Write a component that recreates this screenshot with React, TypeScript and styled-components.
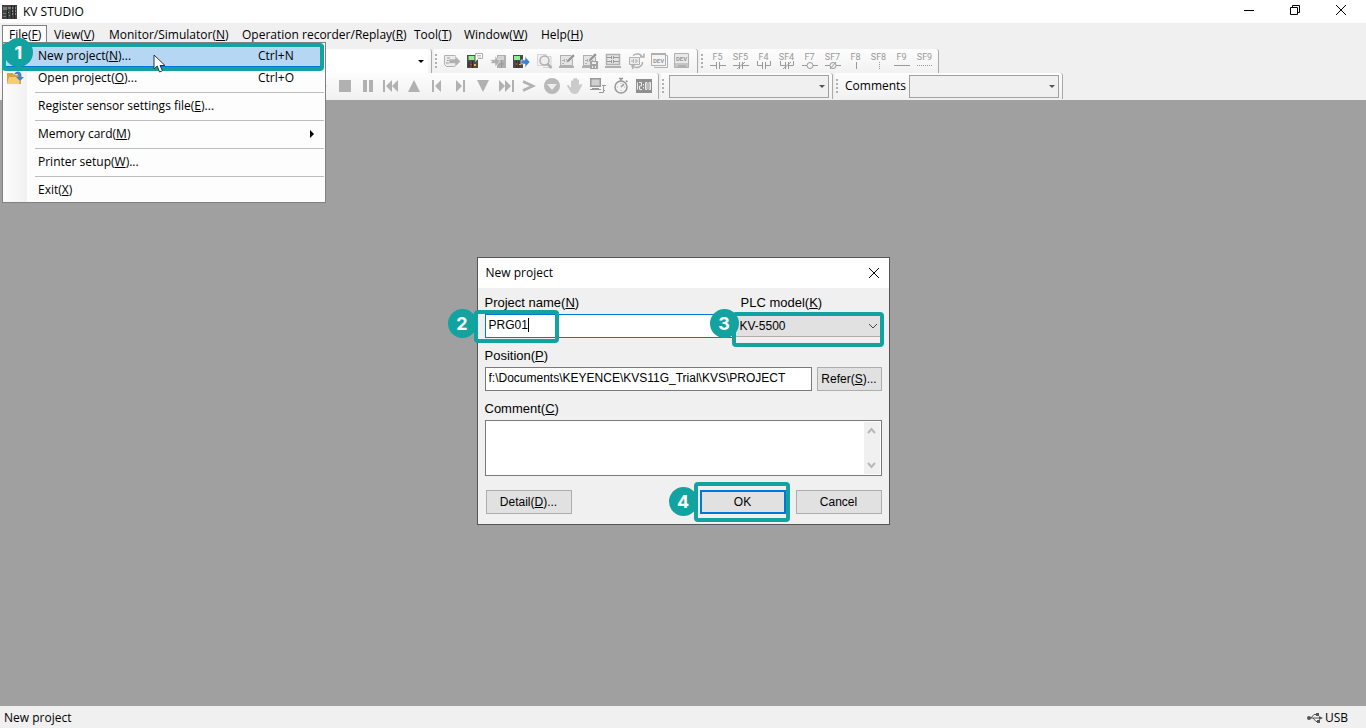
import React from "react";
import styled, { createGlobalStyle, css } from "styled-components";

const TEAL = "#12a3a0";
const UI_FONT = `"Open Sans", "Noto Sans", sans-serif`;
const DIALOG_FONT = `"Liberation Sans", Arial, sans-serif`;

const GlobalStyle = createGlobalStyle`
  *, *::before, *::after { box-sizing: border-box; }
  body { margin: 0; background: #a0a0a0; color: #000; font: 12px/16px ${UI_FONT}; }
  button, select, input, textarea { font: inherit; color: inherit; margin: 0; }
  svg { display: block; flex: none; }
`;

const Window = styled.div`
  display: flex;
  flex-direction: column;
  min-height: 100vh;
`;

const TitleBar = styled.header`
  display: flex;
  align-items: center;
  height: 23px;
  padding-left: 2px;
  gap: 5px;
  background: #fff;
`;

const AppTitle = styled.h1`
  flex: 1;
  margin: 0;
  font-size: 12px;
  font-weight: 400;
`;

const CaptionButton = styled.button`
  display: flex;
  align-items: center;
  justify-content: center;
  width: 46px;
  height: 20px;
  padding: 0;
  border: 0;
  background: none;
`;

const CaptionButtons = styled.div`
  display: flex;
  align-self: flex-start;
  padding-right: 2px;
`;

const MenuBar = styled.nav`
  display: flex;
  height: 26px;
  padding: 2px 2px 4px;
  background: #f0f0f0;
`;

const MenuGroup = styled.div`
  position: relative;
`;

const MenuTitle = styled.button<{ $open?: boolean; $width: number }>`
  width: ${(p) => p.$width}px;
  height: 20px;
  padding: 0 0 2px 6px;
  border: 1px solid ${(p) => (p.$open ? "#808080" : "transparent")};
  border-bottom: 0;
  background: ${(p) => (p.$open ? "#fcfcfc" : "none")};
  line-height: 16px;
  text-align: left;
  white-space: nowrap;
`;

const DropDown = styled.div`
  position: absolute;
  top: 17px;
  left: 0;
  z-index: 5;
  width: 324px;
  padding: 2px 1px 1px 0;
  border: 1px solid #808080;
  background: linear-gradient(90deg, #fcfcfc, #f1f1f1) 0 0 / 24px 100% no-repeat #fdfdfd;
`;

const MenuItem = styled.button<{ $active?: boolean }>`
  position: relative;
  display: grid;
  grid-template-columns: 35px 1fr 66px;
  align-items: center;
  width: 100%;
  height: 22px;
  padding: 0;
  border: 0;
  border-bottom: 1px solid ${(p) => (p.$active ? "#0078d7" : "transparent")};
  background: ${(p) => (p.$active ? "#b5d7f3" : "none")};
  text-align: left;
`;

const Separator = styled.hr`
  height: 1px;
  margin: 3px 0 2px 32px;
  border: 0;
  background: #bdbdbd;
`;

const IconCell = styled.span`
  display: flex;
  padding-left: 4px;
`;

const ArrowCell = styled.span`
  display: flex;
  padding-left: 52px;
`;

const Highlight = styled.span<{ $inset: string }>`
  position: absolute;
  z-index: 2;
  inset: ${(p) => p.$inset};
  border: 4px solid ${TEAL};
  border-radius: 4px;
  pointer-events: none;
`;

const Badge = styled.span<{ $x: number; $y: number }>`
  position: absolute;
  z-index: 3;
  left: ${(p) => p.$x}px;
  top: ${(p) => p.$y}px;
  width: 29px;
  height: 29px;
  border-radius: 50%;
  background: ${TEAL};
  color: #fff;
  font: 700 18px/29px Inter, sans-serif;
  text-align: center;
  pointer-events: none;
`;

const Pointer = styled.svg`
  position: absolute;
  z-index: 4;
  left: 150px;
  top: 9px;
`;

const ToolBars = styled.div`
  display: flex;
  flex-direction: column;
  padding-bottom: 1px;
  background: #f0f0f0;
`;

const ToolRow = styled.div<{ $height: number }>`
  display: flex;
  gap: 2px;
  height: ${(p) => p.$height}px;
`;

const Strip = styled.div<{ $width: number }>`
  display: flex;
  align-items: center;
  width: ${(p) => p.$width}px;
  border-right: 1px solid #a9a9a9;
  border-radius: 0 3px 0 0;
  background: linear-gradient(#fdfdfd, #f1f1f1);
`;

const Grip = styled.i`
  flex: none;
  width: 2px;
  height: 14px;
  margin: 0 3px 0 1px;
  background: repeating-linear-gradient(#b0b0b0 0 2px, transparent 2px 4px);
`;

const ToolButton = styled.button`
  display: flex;
  flex-direction: column;
  align-items: center;
  justify-content: center;
  width: 23px;
  height: 22px;
  padding: 0;
  border: 0;
  background: none;
  color: #999;
`;

const KeyCaption = styled.span`
  height: 8px;
  font: 9px/8px "Liberation Sans Narrow", "Roboto", sans-serif;
`;

const PlaybackGroup = styled.div`
  display: flex;
  margin-left: auto;
  padding-right: 3px;
`;

const Combo = styled.span<{ $width: number }>`
  display: flex;
  position: relative;
  width: ${(p) => p.$width}px;
  margin-left: 2px;
`;

const ComboArrow = styled.svg`
  position: absolute;
  right: 4px;
  top: 9px;
  pointer-events: none;
`;

const ToolSelect = styled.select<{ $plain?: boolean }>`
  appearance: none;
  width: 100%;
  height: 23px;
  border: 1px solid ${(p) => (p.$plain ? "#fff" : "#a0a0a0")};
  border-radius: 0;
  background: ${(p) => (p.$plain ? "#fff" : "#f0f0f0")};
`;

const ToolLabel = styled.label`
  width: 66px;
  padding-left: 4px;
`;

const Workspace = styled.main`
  display: flex;
  flex: 1;
  flex-direction: column;
  align-items: center;
  padding: 157px 16px 32px;
  background: #a0a0a0;
`;

const Dialog = styled.section`
  width: 413px;
  border: 1px solid #555;
  background: #f0f0f0;
  font: 12px/16px ${DIALOG_FONT};
`;

const DialogHeader = styled.header`
  display: flex;
  align-items: center;
  justify-content: space-between;
  height: 30px;
  padding-left: 8px;
  background: #fff;
`;

const DialogTitle = styled.h2`
  margin: 0;
  font: 400 12px/16px ${UI_FONT};
`;

const DialogClose = styled.button`
  display: flex;
  align-items: center;
  justify-content: center;
  width: 30px;
  height: 28px;
  padding: 0;
  border: 0;
  background: none;
`;

const DialogForm = styled.form`
  display: flex;
  flex-direction: column;
  gap: 10px;
  padding: 7px 7px 10px;
`;

const FieldRow = styled.div`
  display: flex;
  align-items: flex-end;
`;

const Field = styled.div<{ $width?: number }>`
  position: relative;
  display: flex;
  flex-direction: column;
  gap: 3px;
  ${(p) => (p.$width ? css`width: ${p.$width}px;` : css`flex: 1;`)}
`;

const FieldLabel = styled.label<{ $indent?: boolean }>`
  padding-left: ${(p) => (p.$indent ? 6 : 0)}px;
  font-size: 13px;
`;

const TextInput = styled.input<{ $focused?: boolean }>`
  width: 100%;
  height: 24px;
  padding: 0 3px 2px;
  border: 1px solid ${(p) => (p.$focused ? "#0078d7" : "#7a7a7a")};
  border-radius: 0;
  background: #fff;
  outline: 0;
`;

const Caret = styled.span`
  position: absolute;
  left: 43px;
  top: 23px;
  width: 1px;
  height: 14px;
  background: #000;
`;

const ModelSelect = styled.select`
  appearance: none;
  width: 100%;
  height: 23px;
  margin-bottom: 1px;
  padding: 0 4px;
  border: 1px solid #adadad;
  border-radius: 0;
  background: #e1e1e1;
`;

const ModelArrow = styled.svg`
  position: absolute;
  right: 4px;
  top: 28px;
  pointer-events: none;
`;

const CommentBox = styled.div`
  display: flex;
  height: 56px;
  padding: 1px;
  border: 1px solid #7a7a7a;
  background: #fff;
`;

const CommentArea = styled.textarea`
  flex: 1;
  padding: 2px;
  border: 0;
  background: none;
  outline: 0;
  resize: none;
`;

const ScrollTrack = styled.div`
  display: flex;
  flex-direction: column;
  align-items: center;
  justify-content: space-between;
  width: 16px;
  padding: 5px 0;
  background: #f0f0f0;
`;

const PushButton = styled.button<{ $default?: boolean; $width: number }>`
  width: ${(p) => p.$width}px;
  height: 24px;
  padding: 0;
  border: ${(p) => (p.$default ? "2px solid #0078d7" : "1px solid #adadad")};
  background: #e1e1e1;
  white-space: nowrap;
`;

const ReferSlot = styled.div`
  display: flex;
  padding-left: 5px;
`;

const Actions = styled.div`
  display: flex;
  gap: 10px;
  padding: 4px 0 0 1px;
`;

const ActionSlot = styled.div`
  position: relative;
  margin-left: auto;
`;

const StatusBar = styled.footer`
  display: flex;
  align-items: center;
  justify-content: space-between;
  height: 22px;
  padding: 1px 18px 0 4px;
  background: #f0f0f0;
`;

const Connection = styled.span`
  display: flex;
  align-items: center;
  gap: 2px;
`;

const Mnemonic = styled.u`
  text-decoration-thickness: 1px;
  text-underline-offset: 1px;
`;

function Caption({ text, k, dots }: { text: string; k: string; dots?: boolean }) {
  return (
    <span>
      {text}(<Mnemonic>{k}</Mnemonic>){dots ? "..." : ""}
    </span>
  );
}

const G = "#b0b0b0";
const D = "#999";
const L = "#d4d4d4";

function Icon({ children }: { children: React.ReactNode }) {
  return (
    <svg width="20" height="20" viewBox="0 0 20 20" aria-hidden="true">
      {children}
    </svg>
  );
}

const laptop = (
  <>
    <rect x="3.500" y="4.500" width="12" height="10" fill="#e4e4e4" stroke={G} />
    <path d="M5 9.500h2M7.500 8v3M9.500 8v3M10 9.500h3M5 12.500h2" stroke={G} fill="none" />
    <path d="M2 15h15v2H2z" fill={G} />
  </>
);

const editIcons: [string, React.ReactNode][] = [
  ["Transfer setup", (
    <>
      <path d="M2.500 4.500h11v11h-9l-2-2z" fill="#ececec" stroke={G} />
      <path d="M5 7h3M5 9.500h2M4 12h4" stroke={D} />
      <path d="M7 8h6V4.500l5.500 6-5.500 5.500v-3.500H7z" fill={G} stroke="#eee" strokeWidth=".6" />
    </>
  )],
  ["Monitor", (
    <>
      <path d="M2 4h11v13H2z" fill="#4b4b4b" />
      <path d="M3.500 5h6v4h-6z" fill="#8eef8e" />
      <path d="M4 11v5M7.500 10v7" stroke="#2c2c2c" />
      <path d="M5 13h2v1H5z" fill="#e33" />
      <path d="M9 13h2v2H9z" fill="#f0b429" />
      <path d="M10.500 2.500h7v5h-4l-3 3z" fill="#fff" stroke="#aaa" />
      <path d="M12 4.500h4M12 6h4" stroke="#aaa" strokeWidth=".7" />
    </>
  )],
  ["Write to PLC", (
    <>
      <path d="M9 4h9v13H9z" fill={G} />
      <path d="M10 5h6v4h-6z" fill={L} />
      <path d="M13.500 9v8M10 13h6" stroke={D} />
      <path d="M2 8.500h5V5l5 5.500L7 16v-3.500H2l2-2z" fill={G} stroke="#f2f2f2" strokeWidth=".7" />
    </>
  )],
  ["Read from PLC", (
    <>
      <path d="M2 4h10v13H2z" fill="#4b4b4b" />
      <path d="M3 5h6v4H3z" fill="#8eef8e" />
      <path d="M5.500 10v7M8 10v7" stroke="#2c2c2c" />
      <path d="M5 12h1v2H5z" fill="#e33" />
      <path d="M8 13h2v1H8z" fill="#f0b429" />
      <path d="M10 9h4V5.500l5 5.500-5 5.500V13h-4z" fill="#3f82cc" stroke="#f4f4f4" strokeWidth=".6" />
    </>
  )],
  ["Verify", (
    <>
      <path d="M3.500 3.500h9v11h-9zM14 5.500h3v11H9" fill="#f2f2f2" stroke={L} />
      <circle cx="10.500" cy="9.500" r="4.500" fill="#eee" stroke={G} strokeWidth="1.500" />
      <path d="m13.500 13 4 4" stroke={G} strokeWidth="2.500" />
    </>
  )],
  ["Edit", (
    <>
      {laptop}
      <path d="m9 12 1-3 6-6 2 2-6 6z" fill={D} stroke="#eee" strokeWidth=".6" />
    </>
  )],
  ["Edit and transfer", (
    <>
      {laptop}
      <path d="m8 11 1-3 6-6 2 2-6 6z" fill={D} stroke="#eee" strokeWidth=".6" />
      <path d="M10 10h8v8h-8z" fill="#a4a4a4" />
      <path d="M12 11h4v2h-4zM12 15h1v2h-1zM15 15h1v2h-1z" fill="#eee" />
    </>
  )],
  ["Ladder monitor", (
    <>
      <path d="M3.500 3.500h13v10h-13z" fill="#e4e4e4" stroke={G} strokeWidth="1.500" />
      <path d="M4 6.500h4M11 6.500h5M4 10.500h4M11 10.500h5M8.500 5v3M10.500 5v3M8.500 9v3M10.500 9v3" stroke={D} />
      <path d="M2 15h16v2H2z" fill={G} />
    </>
  )],
  ["Refresh", (
    <>
      <path d="M3.500 6.500h10v7h-10z" fill="#ececec" stroke={G} />
      <path d="M5 10h2M7.500 8v4M10 8v4M10 10h2" stroke={G} />
      <path d="M7 4.500c4-3 8-1.500 9.500 2M14 6h4V2.500" fill="none" stroke={G} strokeWidth="1.500" />
      <path d="M16.500 11c0 5-6 7-10 4M9 13.500l-3 1.500 1 3" fill="none" stroke={G} strokeWidth="1.500" />
    </>
  )],
  ["Device comment", (
    <>
      <path d="M5.500 15.500v1h13v-12h-2" fill="none" stroke={G} />
      <path d="M2.500 2.500h14v12h-14z" fill="#f4f4f4" stroke={G} />
      <path d="M2 2h15v2H2z" fill={G} />
      <text x="9.500" y="12" fontSize="6" fontWeight="700" textAnchor="middle" fill={D} fontFamily="Roboto">DEV</text>
    </>
  )],
  ["Device monitor", (
    <>
      <path d="M2.500 2.500h14v14h-14z" fill="#e8e8e8" stroke={G} />
      <path d="M3 12h13v4H3z" fill="#c6c6c6" />
      <path d="M6 14h8v3H6z" fill={G} />
      <text x="9.500" y="10" fontSize="6" fontWeight="700" textAnchor="middle" fill={D} fontFamily="Roboto">DEV</text>
    </>
  )],
];

const keyIcons: [string, string][] = [
  ["F5", "M0 6.500h6M6.500 3v7M9.500 3v7M10 6.500h6"],
  ["SF5", "M0 6.500h6M6.500 3v7M9.500 3v7M10 6.500h6M4 10l8-7"],
  ["F4", "M1.500 2v4.500H6M6.500 3v7M9.500 3v7M10 6.500h4.500V2"],
  ["SF4", "M1.500 2v4.500H6M6.500 3v7M9.500 3v7M10 6.500h4.500V2M4 10l8-7"],
  ["F7", "M0 6.500h5M11 6.500h5M5 6.500a3 3 0 1 0 6 0a3 3 0 1 0-6 0"],
  ["SF7", "M0 6.500h5M11 6.500h5M5 6.500a3 3 0 1 0 6 0a3 3 0 1 0-6 0M5 10l6-7"],
  ["F8", "M8.500 3v7"],
  ["SF8", "M8.500 3v1M8.500 5v1M8.500 7v1M8.500 9v1"],
  ["F9", "M0 6.500h16"],
  ["SF9", "M0 6.500h1M2 6.500h1M4 6.500h1M6 6.500h1M8 6.500h1M10 6.500h1M12 6.500h1M14 6.500h1"],
];

const S = "#b1b1b1";
const playIcons: [string, React.ReactNode][] = [
  ["Run", <path d="M5 4v12l10-6z" fill={S} />],
  ["Stop", <path d="M4 4h12v12H4z" fill={S} />],
  ["Pause", <path d="M5 4h4v12H5zM11 4h4v12h-4z" fill={S} />],
  ["Rewind", <path d="M2 4h2v12H2zM11 4v12l-6-6zM17 4v12l-6-6z" fill={S} />],
  ["Step up", <path d="M10 4l6 12H4z" fill={S} />],
  ["Step back", <path d="M5 4h2v12H5zM14 4v12l-6-6z" fill={S} />],
  ["Step forward", <path d="M13 4h2v12h-2zM6 4v12l6-6z" fill={S} />],
  ["Step down", <path d="M4 4h12l-6 12z" fill={S} />],
  ["Fast forward", <path d="M16 4h2v12h-2zM3 4v12l6-6zM9 4v12l6-6z" fill={S} />],
  ["Continue", <path d="M4 5.500 14 10 4 14.500" fill="none" stroke={S} strokeWidth="2.500" />],
  ["Record", (
    <>
      <circle cx="10" cy="10" r="8" fill="#b9b9b9" />
      <path d="M5 8h10l-5 6z" fill="#eee" />
    </>
  )],
  ["Hand", (
    <path d="M6 12V5q1-1.500 2 0V3q1-1.500 2 0V2.500q1-1.500 2 0V4q1.500-1.500 2 0v5l2-1q2 0 1 1.500L14 15q-1 3-4 3-4 0-5-3L2 10q0-1.500 1.500-1L6 12z" fill="#cbcbcb" />
  )],
  ["Network", (
    <>
      <path d="M2 2h11v9H2z" fill={D} />
      <path d="M3.500 3.500h8v6h-8z" fill="#d0d0d0" />
      <path d="M4 12h7v1H4zM2 13h11v1H2z" fill={D} />
      <path d="M11 16.500h4.500v-7M14 9.500h4M17 14l-2 2" stroke={D} fill="none" />
    </>
  )],
  ["Timer", (
    <>
      <circle cx="10" cy="11" r="6" fill="#f3f3f3" stroke={D} strokeWidth="1.500" />
      <path d="M8 2.500h4M10 2.500V5M15 4.500l1.500 1.500M10 11l3-3" stroke={D} strokeWidth="1.500" fill="none" />
      <path d="M10 7v1M6 11h1M13 11h1M10 14v1" stroke={G} />
    </>
  )],
  ["Clock", (
    <>
      <path d="M2 3h16v14H2z" fill="#8e8e8e" />
      <path d="M3.500 6.500v7M5 6.500h2.500V10H5.500v3.500H8M9.500 8v1.500M9.500 11v1.500M11.500 6.500h1.500v7h-1.500zM15 6.500h1.500v7H15z" fill="none" stroke="#eee" />
    </>
  )],
];

const menus: [string, string, number][] = [
  ["View", "V", 55],
  ["Monitor/Simulator", "N", 133],
  ["Operation recorder/Replay", "R", 172],
  ["Tool", "T", 50],
  ["Window", "W", 77],
  ["Help", "H", 56],
];

function DownArrow({ color = "#555" }: { color?: string }) {
  return (
    <ComboArrow width="6" height="5" viewBox="0 0 6 5">
      <path d="M0 1h6L3 4z" fill={color} />
    </ComboArrow>
  );
}

export default function App() {
  return (
    <Window>
      <GlobalStyle />
      <TitleBar>
        <svg width="16" height="16" viewBox="0 0 16 16" aria-hidden="true">
          <path d="M0 1h15v14H0z" fill="#424242" />
          <path d="M1 3h4v3H1zM6 3h3v2H6zM1 9h3v1H1zM1 12h3v1H1z" fill="#777" />
          <path d="M5.500 6v9M9.500 1v14M12.500 1v14" stroke="#222" />
          <path d="M10.500 3v9M13.500 3v9" stroke="#8a8a8a" strokeDasharray="2 1" />
          <path d="M6 8h1v1H6zM7 11h1v1H7z" fill="#6b6" />
        </svg>
        <AppTitle>KV STUDIO</AppTitle>
        <CaptionButtons>
          <CaptionButton aria-label="Minimize">
            <svg width="12" height="12" viewBox="0 0 12 12"><path d="M1 6.500h10" stroke="#000" /></svg>
          </CaptionButton>
          <CaptionButton aria-label="Restore">
            <svg width="12" height="12" viewBox="0 0 12 12"><path d="M1.500 3.500h7v7h-7zM3.500 3V1.500h7v7H9" fill="none" stroke="#000" /></svg>
          </CaptionButton>
          <CaptionButton aria-label="Close">
            <svg width="12" height="12" viewBox="0 0 12 12"><path d="m1 1 10 10M11 1 1 11" stroke="#000" /></svg>
          </CaptionButton>
        </CaptionButtons>
      </TitleBar>

      <MenuBar>
        <MenuGroup>
          <MenuTitle $open $width={45}><Caption text="File" k="F" /></MenuTitle>
          <DropDown>
            <MenuItem $active>
              <span />
              <Caption text="New project" k="N" dots />
              <span>Ctrl+N</span>
              <Highlight $inset="-2px 0 -5px -1px" />
              <Badge $x={1} $y={-7}>1</Badge>
              <Pointer width="13" height="20" viewBox="0 0 13 20">
                <path d="M1 1v14l3.200-3 2.300 6 3-1.200-2.500-5.300H12z" fill="#fff" stroke="#333" />
              </Pointer>
            </MenuItem>
            <MenuItem>
              <IconCell>
                <svg width="17" height="16" viewBox="0 0 17 16" aria-hidden="true">
                  <path d="M0 3h6l1 2h7v9H0z" fill="#d9a43b" />
                  <path d="M2 7h12l-2 7H0z" fill="#f6cd72" />
                  <path d="M7 5c1-5 8-5 7.500 2H17l-4 4-4-4h2.500C12 3.500 9 3.500 7 5z" fill="#4a80c4" />
                </svg>
              </IconCell>
              <Caption text="Open project" k="O" dots />
              <span>Ctrl+O</span>
            </MenuItem>
            <Separator />
            <MenuItem><span /><Caption text="Register sensor settings file" k="E" dots /></MenuItem>
            <Separator />
            <MenuItem>
              <span />
              <Caption text="Memory card" k="M" />
              <ArrowCell>
                <svg width="5" height="8" viewBox="0 0 5 8"><path d="M0 0v8l4-4z" /></svg>
              </ArrowCell>
            </MenuItem>
            <Separator />
            <MenuItem><span /><Caption text="Printer setup" k="W" dots /></MenuItem>
            <Separator />
            <MenuItem><span /><Caption text="Exit" k="X" /></MenuItem>
          </DropDown>
        </MenuGroup>
        {menus.map(([text, k, width]) => (
          <MenuTitle key={text} $width={width}><Caption text={text} k={k} /></MenuTitle>
        ))}
      </MenuBar>

      <ToolBars>
        <ToolRow $height={24}>
          <Strip $width={432}>
            <Combo $width={426}>
              <ToolSelect $plain aria-label="Unit" />
              <DownArrow color="#000" />
            </Combo>
          </Strip>
          <Strip $width={264}>
            <Grip />
            {editIcons.map(([name, art]) => (
              <ToolButton key={name} aria-label={name}><Icon>{art}</Icon></ToolButton>
            ))}
          </Strip>
          <Strip $width={239}>
            <Grip />
            {keyIcons.map(([name, d]) => (
              <ToolButton key={name}>
                <KeyCaption>{name}</KeyCaption>
                <svg width="16" height="9" viewBox="0 2 16 9" aria-hidden="true">
                  <path d={d} fill="none" stroke="#999" />
                </svg>
              </ToolButton>
            ))}
          </Strip>
        </ToolRow>
        <ToolRow $height={26}>
          <Strip $width={659}>
            <PlaybackGroup>
              {playIcons.map(([name, art]) => (
                <ToolButton key={name} aria-label={name}><Icon>{art}</Icon></ToolButton>
              ))}
            </PlaybackGroup>
          </Strip>
          <Strip $width={172}>
            <Grip />
            <Combo $width={160}>
              <ToolSelect aria-label="Target" />
              <DownArrow />
            </Combo>
          </Strip>
          <Strip $width={228}>
            <Grip />
            <ToolLabel htmlFor="comments">Comments</ToolLabel>
            <Combo $width={150}>
              <ToolSelect id="comments" />
              <DownArrow />
            </Combo>
          </Strip>
        </ToolRow>
      </ToolBars>

      <Workspace>
        <Dialog role="dialog" aria-labelledby="dialog-title">
          <DialogHeader>
            <DialogTitle id="dialog-title">New project</DialogTitle>
            <DialogClose aria-label="Close">
              <svg width="12" height="12" viewBox="0 0 12 12"><path d="m1 1 10 10M11 1 1 11" stroke="#000" /></svg>
            </DialogClose>
          </DialogHeader>
          <DialogForm onSubmit={(e) => e.preventDefault()}>
            <FieldRow>
              <Field $width={250}>
                <FieldLabel htmlFor="name"><Caption text="Project name" k="N" /></FieldLabel>
                <TextInput id="name" $focused defaultValue="PRG01" />
                <Caret />
                <Highlight $inset="15px 176px -5px -11px" />
                <Badge $x={-37} $y={14}>2</Badge>
              </Field>
              <Field>
                <FieldLabel htmlFor="model" $indent><Caption text="PLC model" k="K" /></FieldLabel>
                <ModelSelect id="model"><option>KV-5500</option></ModelSelect>
                <ModelArrow width="10" height="7" viewBox="0 0 10 7">
                  <path d="m1 1 4 4 4-4" fill="none" stroke="#444" />
                </ModelArrow>
                <Highlight $inset="17px -2px -9px -3px" />
                <Badge $x={-25} $y={14}>3</Badge>
              </Field>
            </FieldRow>
            <FieldRow>
              <Field>
                <FieldLabel htmlFor="position"><Caption text="Position" k="P" /></FieldLabel>
                <TextInput id="position" defaultValue="f:\Documents\KEYENCE\KVS11G_Trial\KVS\PROJECT" />
              </Field>
              <ReferSlot>
                <PushButton type="button" $width={65}><Caption text="Refer" k="S" dots /></PushButton>
              </ReferSlot>
            </FieldRow>
            <Field>
              <FieldLabel htmlFor="comment"><Caption text="Comment" k="C" /></FieldLabel>
              <CommentBox>
                <CommentArea id="comment" />
                <ScrollTrack>
                  <svg width="9" height="8" viewBox="0 0 9 8"><path d="m1 6 3.500-4L8 6" fill="none" stroke="#b8b8b8" strokeWidth="2" /></svg>
                  <svg width="9" height="8" viewBox="0 0 9 8"><path d="m1 2 3.500 4L8 2" fill="none" stroke="#b8b8b8" strokeWidth="2" /></svg>
                </ScrollTrack>
              </CommentBox>
            </Field>
            <Actions>
              <PushButton type="button" $width={86}><Caption text="Detail" k="D" dots /></PushButton>
              <ActionSlot>
                <PushButton $default $width={86}>OK</PushButton>
                <Highlight $inset="-8px -4px -8px -6px" />
                <Badge $x={-31} $y={-3}>4</Badge>
              </ActionSlot>
              <PushButton type="button" $width={86}>Cancel</PushButton>
            </Actions>
          </DialogForm>
        </Dialog>
      </Workspace>

      <StatusBar>
        <span>New project</span>
        <Connection>
          <svg width="16" height="12" viewBox="0 0 16 12" aria-hidden="true">
            <path d="M2 6h11M4 6l3-3.500h3M6 6l3 3.500h2" fill="none" stroke="#555" />
            <circle cx="2" cy="6" r="2" fill="#555" />
            <path d="M12 4l4 2-4 2zM9 1h3v3H9zM10 8h3v3h-3z" fill="#555" />
          </svg>
          USB
        </Connection>
      </StatusBar>
    </Window>
  );
}
